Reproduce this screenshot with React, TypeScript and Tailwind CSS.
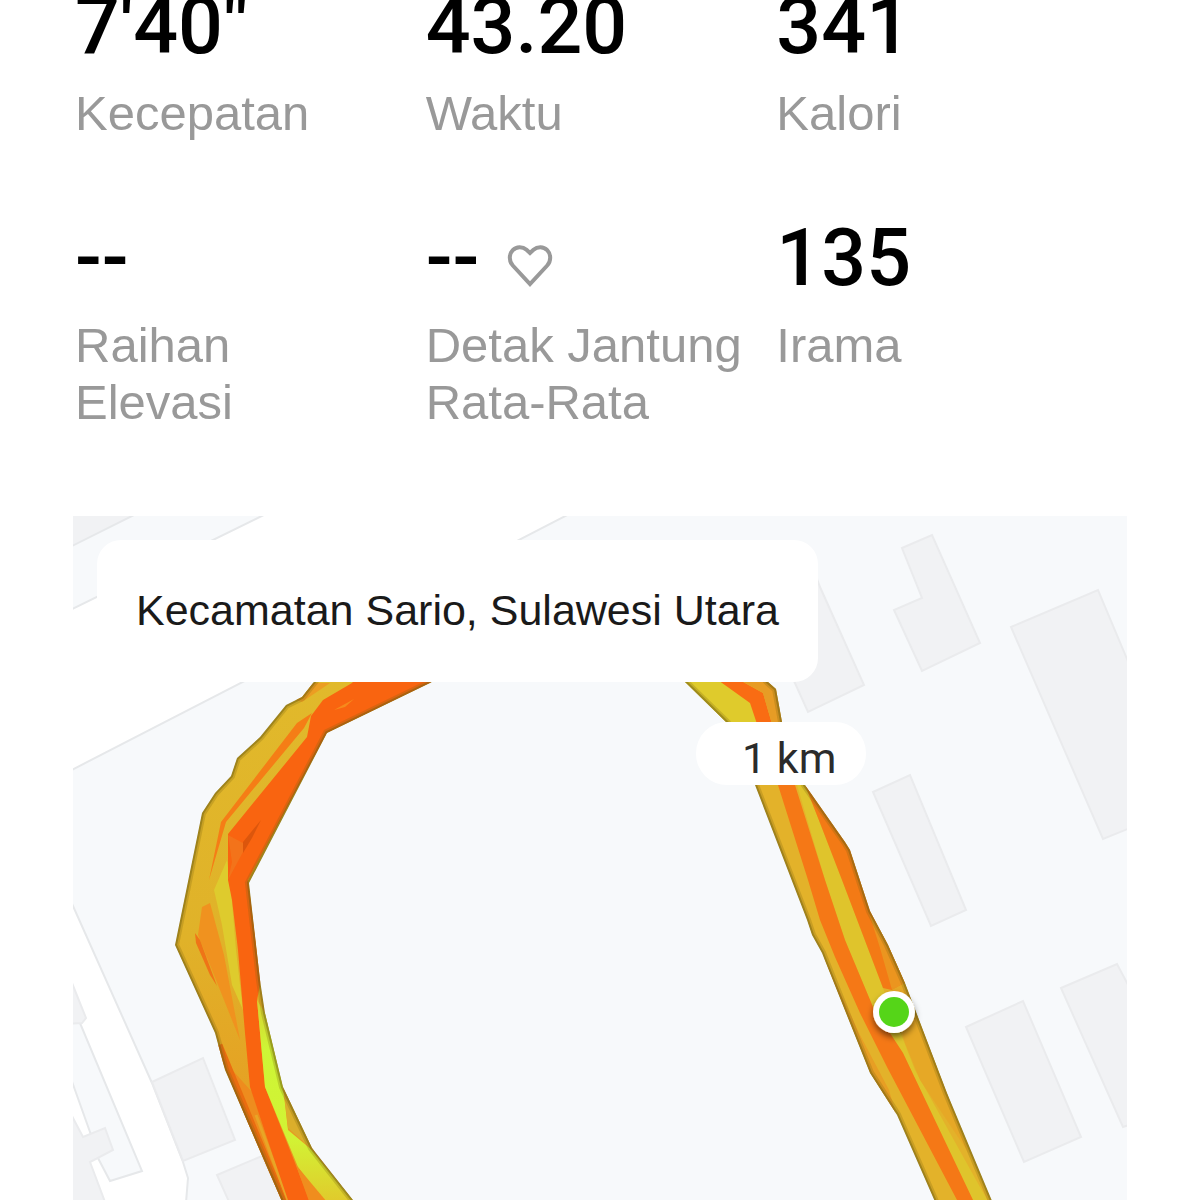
import type { ReactNode } from "react";

interface Stat {
  label: string;
  value: string;
  icon?: ReactNode;
}

function HeartIcon() {
  return (
    <svg className="mt-4 h-11 w-[46px]" viewBox="0 0 46 44" fill="none" stroke="#999999" strokeWidth={4} aria-hidden="true">
      <path d="M23 9 L19.5 5.8 C15.5 2.2 9.5 2.2 5.8 6.2 C1.8 10.4 1.8 17.2 5.8 21.5 L23 40 L40.2 21.5 C44.2 17.2 44.2 10.4 40.2 6.2 C36.5 2.2 30.5 2.2 26.5 5.8 Z" />
    </svg>
  );
}

const stats: Stat[] = [
  { label: "Kecepatan", value: "7'40\"" },
  { label: "Waktu", value: "43.20" },
  { label: "Kalori", value: "341" },
  { label: "Raihan Elevasi", value: "--" },
  { label: "Detak Jantung Rata-Rata", value: "--", icon: <HeartIcon /> },
  { label: "Irama", value: "135" },
];

const buildings = [
  "902,548 932,535 980,643 922,671 894,610 922,598",
  "810,560 820,587 864,685 808,712 780,650",
  "1011,627 1098,590 1135,678 1135,826 1103,839",
  "873,792 910,775 966,910 931,926",
  "966,1027 1023,1001 1081,1137 1024,1162",
  "1061,988 1117,964 1135,998 1135,1123 1123,1127",
  "152,1082 203,1058 235,1140 183,1161",
  "217,1175 262,1156 290,1215 235,1215",
  "65,970 72,983 86,1018 82,1023 65,1024",
  "65,1102 73,1118 83,1137 105,1128 113,1150 90,1162 108,1210 65,1210",
];

const leftTrack =
  "M340 650 L313 683 L302 697 L286 705 L260 737 L237 758 L231 776 L215 793 L202 813 L175 945 L215 1033 L225 1070 L290 1220 L370 1220 L353 1200 L312 1148 L283 1087 L265 1013 L260 980 L249 883 L327 733 L430 683 L490 650 Z";
const rightTrack =
  "M655 652 L685 682 L727 723 L755 785 L807 920 L812 935 L822 953 L870 1073 L897 1115 L943 1220 L1000 1220 L947 1093 L905 983 L888 945 L870 911 L850 850 L845 842 L805 785 L782 722 L776 689 L768 682 L740 650 Z";

function RouteMap() {
  return (
    <svg
      className="absolute inset-0 h-full w-full"
      viewBox="73 516 1054 684"
      preserveAspectRatio="xMinYMin slice"
      role="img"
      aria-label="Kecamatan Sario, Sulawesi Utara"
    >
      <defs>
        <clipPath id="left-track">
          <path d={leftTrack} />
        </clipPath>
        <clipPath id="right-track">
          <path d={rightTrack} />
        </clipPath>
        <linearGradient id="lime" x1="0" y1="1000" x2="0" y2="1200" gradientUnits="userSpaceOnUse">
          <stop offset="0" stopColor="#d8d030" />
          <stop offset="0.25" stopColor="#cdf636" />
          <stop offset="0.7" stopColor="#d2f234" />
          <stop offset="1" stopColor="#e0cb2c" />
        </linearGradient>
        <linearGradient id="gold" x1="0" y1="680" x2="0" y2="1200" gradientUnits="userSpaceOnUse">
          <stop offset="0" stopColor="#e1b92b" />
          <stop offset="0.5" stopColor="#e0b229" />
          <stop offset="1" stopColor="#e9951f" />
        </linearGradient>
        <filter id="marker-shadow" x="-50%" y="-50%" width="200%" height="200%">
          <feDropShadow dx="0" dy="4" stdDeviation="3" floodOpacity="0.5" />
        </filter>
      </defs>

      <rect x="73" y="516" width="1054" height="684" fill="#f7f9fb" />

      {/* Roads */}
      <g stroke="#e6e8ea" strokeWidth={2}>
        <path d="M60 510 L144 510 L60 552 Z" fill="#f1f2f4" />
        <path d="M274 510 L577 510 L60 776 L60 615 Z" fill="#ffffff" />
        <path d="M65 888 L152 1083 L183 1162 L188 1178 L185 1215 L65 1215 Z" fill="#ffffff" />
        <path d="M65 1022 L80 1023 L142 1171 L110 1181 L98 1158 L90 1132 L65 1062 Z" fill="#f7f9fb" />
      </g>

      {/* Buildings */}
      <g fill="#f1f2f4" stroke="#eaebed" strokeWidth={2}>
        {buildings.map((points) => (
          <polygon key={points} points={points} />
        ))}
      </g>

      {/* Left side of the track */}
      <g clipPath="url(#left-track)">
        <path d={leftTrack} fill="url(#gold)" />
        <path d="M313 683 L330 683 L302 702 L296 700 Z" fill="#ec9d22" />
        <path d="M227 860 L231 890 L236 950 L243 1010 L232 985 L222 925 L214 890 Z" fill="#decb2d" />
        <path d="M202 907 L210 903 L224 955 L240 1040 L228 1010 L198 935 Z" fill="#f0921f" />
        <path d="M195 933 L200 940 L217 986 L210 975 L196 943 Z" fill="#ef7417" />
        <path d="M312 713 L297 723 L221 822 L209 880 L226 822 L304 728 Z" fill="#f57d16" />
        <path d="M213 1028 L225 1062 L252 1092 L270 1147 L288 1200 L275 1200 Z" fill="#ee8c1e" />
        <path d="M219 1045 L284 1202" stroke="#ea6c10" strokeWidth={7} />
        <path d="M256 1115 L288 1200" stroke="#e8a526" strokeWidth={3} />
        <path
          d="M352 683 L323 700 L311 716 L307 737 L228 834 L228 880 L232 900 L238 950 L245 1033 L250 1087 L270 1147 L288 1200 L294 1215 L315 1215 L295 1163 L265 1087 L257 1000 L261 980 L248 880 L327 733 L430 683 L480 650 L380 650 Z"
          fill="#f96410"
        />
        <path d="M228 835 L232 862 L228 880 L243 852 L243 843 Z" fill="#f3731a" />
        <path d="M243 842 L261 820 L252 838 L243 853 Z" fill="#dc560c" />
        <path d="M334 710 L354 699 L345 707 Z" fill="#f68a1c" />
        <path d="M257 1000 L266 1015 L283 1087 L288 1130 L312 1150 L365 1215 L323 1200 L298 1167 L265 1087 Z" fill="url(#lime)" />
        <path d="M283 1085 L315 1152 L288 1128 Z" fill="#dbae2b" />
        <path d="M296 1165 L327 1202 L310 1204 Z" fill="#f08d1e" />
        <path d={leftTrack} fill="none" stroke="#7b6410" strokeOpacity={0.25} strokeWidth={8} />
        <path d={leftTrack} fill="none" stroke="#6f6012" strokeOpacity={0.45} strokeWidth={4} />
      </g>

      {/* Right side of the track */}
      <g clipPath="url(#right-track)">
        <path d={rightTrack} fill="#e3b22a" />
        <path d="M650 650 L700 660 L750 700 L760 725 L725 725 Z" fill="#dfcb2c" />
        <path d="M690 660 L743 682 L763 693 L772 724 L757 724 L750 703 Z" fill="#f96c13" />
        <path d="M740 680 L775 680 L784 724 L772 724 L763 693 Z" fill="#e79c25" />
        <path d="M797 785 L805 785 L820 823 L842 880 L883 988 L915 1070 L980 1187 L996 1215 L978 1215 L903 1053 L873 1007 L845 940 L825 880 Z" fill="#dfc42c" />
        <path d="M805 785 L850 840 L872 910 L890 945 L905 983 L892 990 L883 988 L842 880 L820 823 Z" fill="#f37a15" />
        <path d="M869 913 L890 945 L905 983 L892 990 L880 948 Z" fill="#eb951f" />
        <path d="M892 990 L905 983 L947 1093 L970 1155 L920 1080 L905 1043 Z" fill="#e6a826" />
        <path d="M822 953 L860 1035 L889 1090 L896 1115 L870 1073 Z" fill="#e79e24" />
        <path
          d="M778 785 L795 785 L825 880 L845 940 L873 1007 L903 1053 L973 1200 L980 1215 L964 1215 L957 1200 L887 1067 L860 1013 L835 957 L820 920 L808 880 Z"
          fill="#f57816"
        />
        <path d={rightTrack} fill="none" stroke="#7b6410" strokeOpacity={0.25} strokeWidth={8} />
        <path d={rightTrack} fill="none" stroke="#6f6012" strokeOpacity={0.45} strokeWidth={4} />
      </g>

      {/* Distance label */}
      <rect x="696" y="722" width="170" height="63" rx="31" fill="#ffffff" />
      <text x="742" y="773" fill="#2b2b2b" className="font-['Roboto',sans-serif] text-[43px]">
        1 km
      </text>

      {/* Start marker */}
      <circle cx="894" cy="1012" r="21" fill="#ffffff" filter="url(#marker-shadow)" />
      <circle cx="894" cy="1012" r="15" fill="#55d518" />
    </svg>
  );
}

export default function App() {
  return (
    <div className="flex min-h-screen flex-col overflow-hidden bg-white px-[73px] font-['Liberation_Sans',Arial,sans-serif]">
      <dl className="-mt-[14px] grid grid-cols-3 gap-y-[76px] pl-0.5">
        {stats.map(({ label, value, icon }) => (
          <div key={label} className="flex flex-col-reverse justify-end gap-[19px] pr-7">
            <dt className="text-[49px] leading-[57px] text-[#999999]">{label}</dt>
            <dd className="flex h-20 items-center gap-7 font-['Roboto',sans-serif] text-[79px] leading-[80px] font-medium text-black">
              {value}
              {icon}
            </dd>
          </div>
        ))}
      </dl>

      <section className="relative mt-[85px] min-h-[480px] flex-1 overflow-hidden p-6">
        <RouteMap />
        <h2 className="relative w-fit rounded-3xl bg-white px-[39px] pt-[45px] pb-[47px] text-[43px] leading-[50px] text-[#1a1a1a]">
          Kecamatan Sario, Sulawesi Utara
        </h2>
      </section>
    </div>
  );
}
